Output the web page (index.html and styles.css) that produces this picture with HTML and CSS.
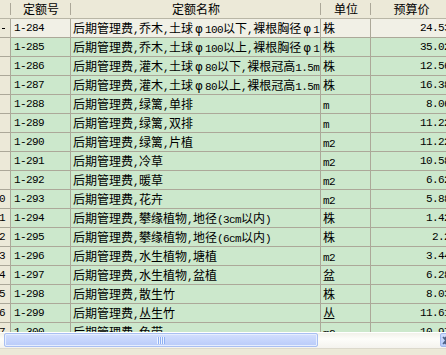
FILE: index.html
```html
<!DOCTYPE html>
<html>
<head>
<meta charset="utf-8">
<link rel="stylesheet" href="styles.css">
</head>
<body>
<div class="view">
  <div class="row head">
    <div class="cell g"></div>
    <div class="cell c">定额号</div>
    <div class="cell n">定额名称</div>
    <div class="cell u">单位</div>
    <div class="cell p">预算价</div>
  </div>
  <div class="row first">
    <div class="cell g"><span class="mark"></span></div>
    <div class="cell c">1-284</div>
    <div class="cell n">后期管理费<span class="a">,</span>乔木<span class="a">,</span>土球<span class="f">φ</span><span class="a">100</span>以下<span class="a">,</span>裸根胸径<span class="f">φ</span><span class="a">1</span></div>
    <div class="cell u">株</div>
    <div class="cell p">24.53</div>
  </div>
  <div class="row">
    <div class="cell g"></div>
    <div class="cell c">1-285</div>
    <div class="cell n">后期管理费<span class="a">,</span>乔木<span class="a">,</span>土球<span class="f">φ</span><span class="a">100</span>以上<span class="a">,</span>裸根胸径<span class="f">φ</span><span class="a">1</span></div>
    <div class="cell u">株</div>
    <div class="cell p">35.02</div>
  </div>
  <div class="row">
    <div class="cell g"></div>
    <div class="cell c">1-286</div>
    <div class="cell n">后期管理费<span class="a">,</span>灌木<span class="a">,</span>土球<span class="f">φ</span><span class="a">80</span>以下<span class="a">,</span>裸根冠高<span class="a">1.5m</span></div>
    <div class="cell u">株</div>
    <div class="cell p">12.56</div>
  </div>
  <div class="row">
    <div class="cell g"></div>
    <div class="cell c">1-287</div>
    <div class="cell n">后期管理费<span class="a">,</span>灌木<span class="a">,</span>土球<span class="f">φ</span><span class="a">80</span>以上<span class="a">,</span>裸根冠高<span class="a">1.5m</span></div>
    <div class="cell u">株</div>
    <div class="cell p">16.38</div>
  </div>
  <div class="row">
    <div class="cell g"></div>
    <div class="cell c">1-288</div>
    <div class="cell n">后期管理费<span class="a">,</span>绿篱<span class="a">,</span>单排</div>
    <div class="cell u"><span class="a">m</span></div>
    <div class="cell p">8.06</div>
  </div>
  <div class="row">
    <div class="cell g"></div>
    <div class="cell c">1-289</div>
    <div class="cell n">后期管理费<span class="a">,</span>绿篱<span class="a">,</span>双排</div>
    <div class="cell u"><span class="a">m</span></div>
    <div class="cell p">11.22</div>
  </div>
  <div class="row">
    <div class="cell g"></div>
    <div class="cell c">1-290</div>
    <div class="cell n">后期管理费<span class="a">,</span>绿篱<span class="a">,</span>片植</div>
    <div class="cell u"><span class="a">m2</span></div>
    <div class="cell p">11.22</div>
  </div>
  <div class="row">
    <div class="cell g"></div>
    <div class="cell c">1-291</div>
    <div class="cell n">后期管理费<span class="a">,</span>冷草</div>
    <div class="cell u"><span class="a">m2</span></div>
    <div class="cell p">10.58</div>
  </div>
  <div class="row">
    <div class="cell g"></div>
    <div class="cell c">1-292</div>
    <div class="cell n">后期管理费<span class="a">,</span>暖草</div>
    <div class="cell u"><span class="a">m2</span></div>
    <div class="cell p">6.62</div>
  </div>
  <div class="row">
    <div class="cell g">10</div>
    <div class="cell c">1-293</div>
    <div class="cell n">后期管理费<span class="a">,</span>花卉</div>
    <div class="cell u"><span class="a">m2</span></div>
    <div class="cell p">5.88</div>
  </div>
  <div class="row">
    <div class="cell g">11</div>
    <div class="cell c">1-294</div>
    <div class="cell n">后期管理费<span class="a">,</span>攀缘植物<span class="a">,</span>地径<span class="a">(3cm</span>以内<span class="a">)</span></div>
    <div class="cell u">株</div>
    <div class="cell p">1.42</div>
  </div>
  <div class="row">
    <div class="cell g">12</div>
    <div class="cell c">1-295</div>
    <div class="cell n">后期管理费<span class="a">,</span>攀缘植物<span class="a">,</span>地径<span class="a">(6cm</span>以内<span class="a">)</span></div>
    <div class="cell u">株</div>
    <div class="cell p">2.2</div>
  </div>
  <div class="row">
    <div class="cell g">13</div>
    <div class="cell c">1-296</div>
    <div class="cell n">后期管理费<span class="a">,</span>水生植物<span class="a">,</span>塘植</div>
    <div class="cell u"><span class="a">m2</span></div>
    <div class="cell p">3.44</div>
  </div>
  <div class="row">
    <div class="cell g">14</div>
    <div class="cell c">1-297</div>
    <div class="cell n">后期管理费<span class="a">,</span>水生植物<span class="a">,</span>盆植</div>
    <div class="cell u">盆</div>
    <div class="cell p">6.28</div>
  </div>
  <div class="row">
    <div class="cell g">15</div>
    <div class="cell c">1-298</div>
    <div class="cell n">后期管理费<span class="a">,</span>散生竹</div>
    <div class="cell u">株</div>
    <div class="cell p">8.03</div>
  </div>
  <div class="row">
    <div class="cell g">16</div>
    <div class="cell c">1-299</div>
    <div class="cell n">后期管理费<span class="a">,</span>丛生竹</div>
    <div class="cell u">丛</div>
    <div class="cell p">11.61</div>
  </div>
  <div class="row">
    <div class="cell g">17</div>
    <div class="cell c">1-300</div>
    <div class="cell n">后期管理费<span class="a">,</span>色带</div>
    <div class="cell u"><span class="a">m2</span></div>
    <div class="cell p">10.97</div>
  </div>
</div>
<div class="hscroll">
  <div class="thumb"><span class="grip"></span></div>
  <div class="track"></div>
  <div class="btn"><svg width="17" height="15" viewBox="0 0 17 15"><path d="M3 4 L6 7.5 L3 11 M5 4 L8 7.5 L5 11" fill="none" stroke="#4d6185" stroke-width="1.5"/></svg></div>
</div>
</body>
</html>
```
FILE: styles.css
```css
* { box-sizing: border-box; }
html, body { margin: 0; padding: 0; }
body {
  width: 446px;
  height: 355px;
  overflow: hidden;
  background: #ece9d8;
  font-family: "Noto Sans CJK SC", "Noto Sans", sans-serif;
  font-size: 12px;
  color: #000;
}
.view {
  width: 460px;
  height: 332px;
  overflow: hidden;
}
.row {
  display: flex;
  height: 19px;
  background: #cce8cc;
}
.row.first { background: #f1f0e6; }
.cell {
  flex: none;
  height: 19px;
  line-height: 18px;
  border-right: 1px solid #aca899;
  border-bottom: 1px solid #aca899;
  white-space: nowrap;
  overflow: hidden;
}
.g {
  width: 11px;
  background: #ece9d8;
  text-align: right;
  padding-right: 5px;
  font-family: "Liberation Mono", monospace;
  font-size: 11px;
  letter-spacing: -0.6px;
  overflow: hidden;
  direction: rtl;
}
.c {
  width: 60px;
  padding-left: 3px;
  font-family: "Liberation Mono", monospace;
  font-size: 11px;
  letter-spacing: -0.6px;
}
.n { width: 250px; padding-left: 2px; }
.u { width: 50px; padding-left: 2px; }
.p {
  width: 81px;
  text-align: right;
  padding-right: 1px;
  font-family: "Liberation Mono", monospace;
  font-size: 11px;
  letter-spacing: -0.6px;
}
.a {
  font-family: "Liberation Mono", monospace;
  font-size: 11px;
  letter-spacing: -0.6px;
  line-height: 1;
}
.f {
  display: inline-block;
  width: 12px;
  text-align: center;
  line-height: 1;
  font-family: "DejaVu Sans", sans-serif;
  font-size: 12px;
}
.mark {
  display: block;
  width: 3px;
  height: 1px;
  background: #000;
  margin: 9px 0 0 0;
}
.head { background: #ece9d8; }
.head .cell {
  position: relative;
  border-right: none;
  border-bottom: 1px solid #b9b6a6;
  text-align: center;
  padding: 0;
  font-family: "Noto Sans CJK SC", sans-serif;
  font-size: 12px;
  letter-spacing: 0;
  line-height: 18px;
}
.head .cell::after {
  content: "";
  position: absolute;
  right: 0;
  top: 3px;
  height: 12px;
  width: 1px;
  background: #aca899;
  box-shadow: 1px 0 0 #fff;
}
.hscroll {
  display: flex;
  width: 457px;
  height: 17px;
  background: linear-gradient(#f2f1ea, #fdfdfa 40%, #f4f3ee);
  border-top: 1px solid #fff;
  border-bottom: 1px solid #dcd9cc;
}
.thumb {
  flex: none;
  width: 314px;
  height: 14px;
  margin: 0 0 0 4px;
  border: 1px solid #a9bff2;
  border-radius: 2px;
  background: linear-gradient(#d3dffd, #c6d5fc 50%, #b9cbf8);
  box-shadow: inset 0 0 0 1px #e6eefe;
  display: flex;
  align-items: center;
  justify-content: center;
}
.grip {
  width: 8px;
  height: 7px;
  background: repeating-linear-gradient(90deg, #eef3ff 0 1px, #8fb0f3 1px 2px);
}
.track { flex: 1; }
.btn {
  flex: none;
  width: 17px;
  height: 14px;
  border: 1px solid #a3b9ee;
  border-radius: 2px;
  background: linear-gradient(#d0ddfd, #b7cbf8);
  overflow: hidden;
}
.btn svg { display: block; margin: -1px 0 0 -1px; }
```
